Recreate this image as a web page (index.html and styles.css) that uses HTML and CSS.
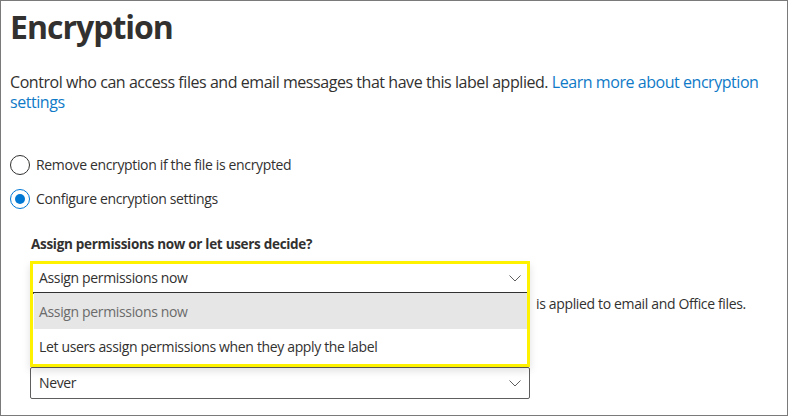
FILE: index.html
```html
<!DOCTYPE html>
<html lang="en">
<head>
<meta charset="utf-8">
<title>Encryption</title>
<link rel="stylesheet" href="styles.css">
</head>
<body>
<div class="panel">
  <h1 class="title">Encryption</h1>
  <p class="intro">Control who can access files and email messages that have this label applied. <a class="link" href="#">Learn more about encryption settings</a></p>

  <div class="radios">
    <label class="radio">
      <span class="circle"></span>
      <span class="radio-text">Remove encryption if the file is encrypted</span>
    </label>
    <label class="radio">
      <span class="circle checked"><span class="dot"></span></span>
      <span class="radio-text">Configure encryption settings</span>
    </label>
  </div>

  <div class="section">
    <div class="field-label">Assign permissions now or let users decide?</div>
    <div class="picker">
      <div class="select">
        <span class="select-text">Assign permissions now</span>
        <svg class="chev" width="12" height="7" viewBox="0 0 12 7"><path d="M0.5 0.5 L6 6 L11.5 0.5" fill="none" stroke="#605e5c" stroke-width="1"/></svg>
      </div>
      <div class="menu">
        <div class="menu-head"></div>
        <div class="option selected">Assign permissions now</div>
        <div class="option">Let users assign permissions when they apply the label</div>
      </div>
    </div>
    <div class="note">
      <span class="note-hidden" aria-hidden="true"></span>
      <span class="note-text">is applied to email and Office files.</span>
    </div>
    <div class="field-spacer" aria-hidden="true"></div>
    <div class="select expiry">
      <span class="select-text">Never</span>
      <svg class="chev" width="12" height="7" viewBox="0 0 12 7"><path d="M0.5 0.5 L6 6 L11.5 0.5" fill="none" stroke="#605e5c" stroke-width="1"/></svg>
    </div>
  </div>
</div>
</body>
</html>
```

FILE: styles.css
```css
html, body {
  margin: 0;
  padding: 0;
  background: #ffffff;
}
body {
  font-family: "Open Sans", "Noto Sans", sans-serif;
  color: #323130;
}
.panel {
  box-sizing: border-box;
  width: 788px;
  height: 416px;
  border: 1px solid #7a7a7a;
  padding: 6px 10px 0 9px;
  overflow: hidden;
}
.title {
  margin: 0;
  font-size: 32px;
  font-weight: 700;
  line-height: 40px;
  letter-spacing: -1px;
  color: #323130;
}
.intro {
  margin: 25px 0 0 0;
  font-size: 16px;
  line-height: 20px;
  letter-spacing: -0.45px;
  width: 760px;
}
.link {
  color: #0f7ac7;
  text-decoration: none;
}
.radios {
  margin-top: 43px;
  display: flex;
  flex-direction: column;
  gap: 14px;
}
.radio {
  display: flex;
  align-items: center;
  gap: 6px;
  height: 20px;
}
.circle {
  box-sizing: border-box;
  width: 20px;
  height: 20px;
  border-radius: 50%;
  border: 1px solid #323130;
  display: flex;
  align-items: center;
  justify-content: center;
}
.circle.checked {
  border-color: #0078d4;
}
.dot {
  width: 10px;
  height: 10px;
  border-radius: 50%;
  background: #0078d4;
}
.radio-text {
  font-size: 14px;
  letter-spacing: -0.35px;
  line-height: 20px;
}
.section {
  margin-left: 20px;
  width: 500px;
}
.field-label {
  margin-top: 25px;
  padding-left: 1px;
  font-size: 13.5px;
  font-weight: 700;
  line-height: 20px;
  letter-spacing: -0.3px;
  height: 20px;
}
.field-spacer {
  margin-top: 16px;
  height: 20px;
}
.picker {
  position: relative;
  margin-top: 8px;
}
.select {
  box-sizing: border-box;
  height: 32px;
  border: 1px solid #605e5c;
  border-radius: 2px;
  display: flex;
  align-items: center;
  justify-content: space-between;
  padding: 0 8px 0 8px;
}
.select.expiry {
  margin-top: 17px;
}
.select-text {
  font-size: 14px;
  letter-spacing: -0.35px;
  line-height: 20px;
}
.chev {
  display: block;
}
.menu {
  position: absolute;
  left: 0;
  top: -1px;
  box-sizing: border-box;
  width: 500px;
  height: 106px;
  border: 3px solid #fff200;
  box-shadow: 0 4px 8px rgba(0, 0, 0, 0.12);
  z-index: 2;
  display: flex;
  flex-direction: column;
}
.menu-head {
  box-sizing: border-box;
  height: 29px;
  border-bottom: 1px solid #323130;
  flex: none;
}
.option {
  height: 35px;
  display: flex;
  align-items: center;
  padding-left: 6px;
  font-size: 14px;
  letter-spacing: -0.35px;
  color: #323130;
  background: #ffffff;
  flex: none;
}
.option.selected {
  height: 36px;
  background: #e6e6e6;
  color: #6b6b6b;
  margin-left: 1px;
  padding-left: 5px;
}
.note {
  display: flex;
  height: 20px;
  line-height: 20px;
  font-size: 14px;
  letter-spacing: -0.35px;
  white-space: nowrap;
  width: 760px;
}
.note-hidden {
  width: 506px;
  flex: none;
}
.note-text {
  flex: none;
}
```
